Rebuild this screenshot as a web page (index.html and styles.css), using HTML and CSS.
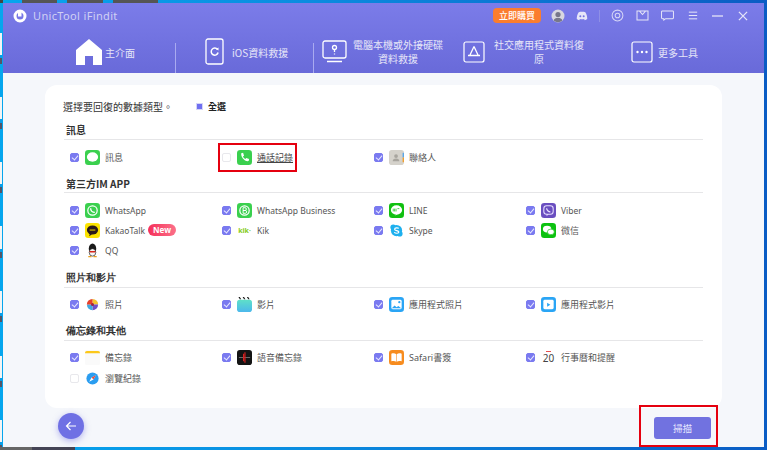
FILE: index.html
```html
<!DOCTYPE html>
<html lang="zh-Hant">
<head>
<meta charset="utf-8">
<title>UnicTool iFindit</title>
<link rel="stylesheet" href="styles.css">
</head>
<body>
<div class="window">
  <header class="head">
    <div class="titlebar">
      <svg class="logo" viewBox="0 0 14 14"><circle cx="7" cy="7" r="5" fill="none" stroke="#fff" stroke-width="3"/><path d="M5 1.500h3.500v6H5z" fill="#fff"/></svg>
      <span class="appname">UnicTool iFindit</span>
      <span class="buy">立即購買</span>
      <svg class="ti avatar" viewBox="0 0 14 14"><circle cx="7" cy="7" r="6.500" fill="#d8d8e0"/><circle cx="7" cy="5.500" r="2.600" fill="#77778a"/><path d="M2.600 11.500a4.600 4 0 0 1 8.800 0 6.500 6.500 0 0 1-8.800 0z" fill="#77778a"/></svg>
      <svg class="ti discord" viewBox="0 0 14 12"><path d="M3 1.500C5 .8 9 .8 11 1.500c1.500 2 2.300 5 2.300 8-1 .8-2 1.200-3 1.500l-.8-1.300c-1.600.4-3.400.4-5 0L3.700 11c-1-.3-2-.7-3-1.500 0-3 .8-6 2.300-8z" fill="#e6e6f8"/><circle cx="5" cy="6.300" r="1.200" fill="#7374e0"/><circle cx="9" cy="6.300" r="1.200" fill="#7374e0"/></svg>
      <span class="vsep"></span>
      <svg class="ti target" viewBox="0 0 14 14"><circle cx="7" cy="7" r="5.800" fill="none" stroke="#d6d6f6" stroke-width="1.100"/><circle cx="7" cy="7" r="2.500" fill="none" stroke="#d6d6f6" stroke-width="1.100"/></svg>
      <svg class="ti mail" viewBox="0 0 14 12"><path d="M1 1h12v10H1zM3.500 1 7 5l3.500-4" fill="none" stroke="#e6e6f8" stroke-width="1.100"/></svg>
      <svg class="ti chat" viewBox="0 0 14 12"><path d="M1.500 1h11a1 1 0 0 1 1 1v6.500a1 1 0 0 1-1 1H5L3 11V9.500H1.500a1 1 0 0 1-1-1V2a1 1 0 0 1 1-1z" fill="none" stroke="#e6e6f8" stroke-width="1.100"/></svg>
      <svg class="ti menu" viewBox="0 0 12 10"><path d="M1 1h10M1 5h10M1 9h10" stroke="#e6e6f8" stroke-width="1.200"/></svg>
      <svg class="ti mini" viewBox="0 0 12 10"><path d="M0 5h12" stroke="#e6e6f8" stroke-width="1.400"/></svg>
      <svg class="ti close" viewBox="0 0 11 11"><path d="M1 1l9 9M10 1l-9 9" stroke="#e6e6f8" stroke-width="1.400"/></svg>
    </div>
    <nav class="tabs">
      <div class="tab tab-home">
        <svg class="ic-home" viewBox="0 0 26 26"><path d="M13 0 26 11v15H17V17H9v9H0V11z" fill="#fff"/></svg>
        <span class="tab-text single">主介面</span>
      </div>
      <div class="tab tab-ios">
        <svg class="ic-phone" viewBox="0 0 20 27"><rect x="1" y="1" width="17" height="25" rx="2" fill="none" stroke="#fff" stroke-width="1.300"/><path d="M12.500 11.500a3.500 3.500 0 1 0 .6 3" fill="none" stroke="#fff" stroke-width="1.500"/><path d="M11 11l2.500-1.500v3z" fill="#fff"/></svg>
        <span class="tab-text single">iOS資料救援</span>
      </div>
      <div class="tab tab-pc">
        <svg class="ic-pc" viewBox="0 0 25 23"><rect x="1" y="1" width="23" height="17" rx="2" fill="none" stroke="#fff" stroke-width="1.300"/><path d="M5 21.500h15" stroke="#fff" stroke-width="1.500"/><circle cx="12.500" cy="7.500" r="2" fill="none" stroke="#fff" stroke-width="1.300"/><path d="M12.500 10v2M12.500 13.500v1" stroke="#fff" stroke-width="1.300"/></svg>
        <span class="tab-text wrap">電腦本機或外接硬碟<br>資料救援</span>
      </div>
      <div class="tab tab-social">
        <svg class="ic-square" viewBox="0 0 22 22"><rect x="1" y="1" width="20" height="20" rx="2" fill="none" stroke="#fff" stroke-width="1.200"/><path d="M11 5.500 7 14M11 5.500 15 14M5 14.500h12" fill="none" stroke="#fff" stroke-width="1.300"/></svg>
        <span class="tab-text wrap social">社交應用程式資料復<br>原</span>
      </div>
      <div class="tab tab-more">
        <svg class="ic-square" viewBox="0 0 22 22"><rect x="1" y="1" width="20" height="20" rx="2" fill="none" stroke="#fff" stroke-width="1.200"/><circle cx="6.500" cy="11" r="1.200" fill="#fff"/><circle cx="11" cy="11" r="1.200" fill="#fff"/><circle cx="15.500" cy="11" r="1.200" fill="#fff"/></svg>
        <span class="tab-text single">更多工具</span>
      </div>
    </nav>
  </header>
  <main class="body">
    <section class="card">
      <div class="intro">
        <span class="intro-text">選擇要回復的數據類型。</span>
        <span class="all-box"></span>
        <span class="all-text">全選</span>
      </div>

      <h2 class="group first">訊息</h2>
      <div class="grid">
        <div class="item"><span class="cb on"></span>
          <svg class="app" viewBox="0 0 16 16"><rect width="16" height="16" rx="3.500" fill="#3ad04e"/><ellipse cx="8" cy="7.500" rx="6" ry="5" fill="#fff"/></svg><span>訊息</span></div>
        <div class="item marked"><span class="cb"></span>
          <svg class="app" viewBox="0 0 16 16"><rect width="16" height="16" rx="3.500" fill="#3ad04e"/><path d="M4.500 3.500 6.500 3l1 3-1.200 1c.5 1.200 1.400 2.100 2.600 2.700l1-1.200 3 1.100-.5 2.200c-4 1-8.500-4-7.900-8.300z" fill="#fff"/></svg><span class="under">通話記錄</span></div>
        <div class="item"><span class="cb on"></span>
          <svg class="app" viewBox="0 0 16 16"><rect width="16" height="16" rx="3" fill="#d5d2cb"/><rect x="14.500" y="3" width="1.500" height="5" fill="#5aa7e8"/><rect x="14.500" y="8" width="1.500" height="5" fill="#f0a030"/><circle cx="7.500" cy="6.500" r="2" fill="#a8a59e"/><path d="M4 12a3.500 3 0 0 1 7 0z" fill="#a8a59e"/></svg><span>聯絡人</span></div>
      </div>

      <h2 class="group">第三方IM APP</h2>
      <div class="grid">
        <div class="item"><span class="cb on"></span>
          <svg class="app" viewBox="0 0 16 16"><rect width="16" height="16" rx="3.500" fill="#3ad04e"/><circle cx="8" cy="8" r="5" fill="none" stroke="#fff" stroke-width="1.300"/><path d="M6 5.500c0 2.500 2 4.500 4.500 4.500" fill="none" stroke="#fff" stroke-width="1.500"/></svg><span class="lat">WhatsApp</span></div>
        <div class="item"><span class="cb on"></span>
          <svg class="app" viewBox="0 0 16 16"><rect width="16" height="16" rx="3.500" fill="#3ad04e"/><circle cx="8" cy="8" r="5" fill="none" stroke="#fff" stroke-width="1.300"/><path d="M6.500 5h2a1.500 1.500 0 0 1 0 3h-2zM6.500 8h2.300a1.500 1.500 0 0 1 0 3H6.500z" fill="none" stroke="#fff"/></svg><span class="lat">WhatsApp Business</span></div>
        <div class="item"><span class="cb on"></span>
          <svg class="app" viewBox="0 0 16 16"><rect width="16" height="16" rx="3.500" fill="#10c010"/><ellipse cx="8" cy="7.500" rx="6" ry="5" fill="#fff"/><path d="M6 13.500l2-1.500h1z" fill="#fff"/><path d="M4.500 6v3M6 6v3M7.500 6v3M9 6h2" stroke="#10c010" stroke-width=".8"/></svg><span class="lat">LINE</span></div>
        <div class="item"><span class="cb on"></span>
          <svg class="app" viewBox="0 0 16 16"><rect width="16" height="16" rx="3.500" fill="#6a4ec0"/><rect x="3" y="3" width="10" height="9" rx="3" fill="none" stroke="#e8e0ff" stroke-width="1.100"/><path d="M6 12v2l2-2" fill="#e8e0ff"/><path d="M6 5.500c0 2 2 4 4 4" fill="none" stroke="#e8e0ff" stroke-width="1.300"/></svg><span class="lat">Viber</span></div>

        <div class="item"><span class="cb on"></span>
          <svg class="app" viewBox="0 0 16 16"><rect width="16" height="16" rx="3.500" fill="#fbe300"/><ellipse cx="8" cy="7.500" rx="6" ry="4.800" fill="#2a1a1a"/><path d="M5 11.500 4.500 14 7.500 12z" fill="#2a1a1a"/><path d="M5 7.500h6" stroke="#fbe300"/></svg><span class="lat">KakaoTalk</span><span class="new">New</span></div>
        <div class="item"><span class="cb on"></span>
          <span class="app kik">kik·</span><span class="lat">Kik</span></div>
        <div class="item"><span class="cb on"></span>
          <svg class="app" viewBox="0 0 16 16"><circle cx="8" cy="8" r="6" fill="#1eb0ee"/><circle cx="4.500" cy="4.500" r="3" fill="#1eb0ee"/><circle cx="11.500" cy="11.500" r="3" fill="#1eb0ee"/><path d="M10.500 5.800c-1-1-4.500-1-4.500.8s4.500 1.200 4.500 3c0 1.700-3.500 1.700-5 .4" fill="none" stroke="#fff" stroke-width="1.300"/></svg><span class="lat">Skype</span></div>
        <div class="item"><span class="cb on"></span>
          <svg class="app" viewBox="0 0 16 16"><rect width="16" height="16" rx="3.500" fill="#0cc210"/><ellipse cx="6.500" cy="6.500" rx="4.500" ry="3.700" fill="#fff"/><ellipse cx="10.500" cy="9.500" rx="3.700" ry="3" fill="#fff" stroke="#0cc210" stroke-width=".7"/></svg><span>微信</span></div>

        <div class="item"><span class="cb on"></span>
          <svg class="app" viewBox="0 0 16 16"><ellipse cx="8" cy="6" rx="4" ry="5.500" fill="#1a1a1a"/><ellipse cx="8" cy="10" rx="3.500" ry="4" fill="#f5f5f5" stroke="#1a1a1a" stroke-width=".7"/><path d="M4.500 8.500h7l-1 1.500h-5z" fill="#d8261c"/><path d="M3.500 14.500h3.500M9 14.500h3.500" stroke="#e9a020" stroke-width="1.300"/></svg><span class="lat">QQ</span></div>
      </div>

      <h2 class="group serif">照片和影片</h2>
      <div class="grid tight">
        <div class="item"><span class="cb on"></span>
          <svg class="app" viewBox="0 0 16 16"><circle cx="8" cy="8" r="6" fill="#f0f0f0"/><path d="M8 2a6 6 0 0 1 6 6H8z" fill="#f5c430"/><path d="M14 8a6 6 0 0 1-6 6V8z" fill="#7050c8"/><path d="M8 14a6 6 0 0 1-6-6h6z" fill="#40a8e0"/><path d="M2 8a6 6 0 0 1 6-6v6z" fill="#e8402a"/><circle cx="8" cy="8" r="1.600" fill="#a02040"/></svg><span>照片</span></div>
        <div class="item"><span class="cb on"></span>
          <svg class="app" viewBox="0 0 16 16"><defs><linearGradient id="fm" x1="0" y1="0" x2="0" y2="1"><stop offset="0" stop-color="#5ee0c8"/><stop offset="1" stop-color="#4cb8ec"/></linearGradient></defs><rect y="3" width="16" height="13" rx="3" fill="url(#fm)"/><path d="M1.500 0l1.500 2.500h1.500L3 0zM6 0l1.500 2.500H9L7.500 0zM10.500 0 12 2.500h1.500L12 0z" fill="#1a1a1a"/></svg><span>影片</span></div>
        <div class="item"><span class="cb on"></span>
          <svg class="app" viewBox="0 0 16 16"><rect width="16" height="16" rx="3.500" fill="#2aa5f5"/><rect x="2.500" y="3" width="11" height="10" rx="1.500" fill="#fff"/><path d="M3 12l3-3 2 2 2-1.500 3 2.500z" fill="#2aa5f5"/><circle cx="11" cy="5.500" r="1.200" fill="#2aa5f5"/></svg><span>應用程式照片</span></div>
        <div class="item"><span class="cb on"></span>
          <svg class="app" viewBox="0 0 16 16"><rect width="16" height="16" rx="3.500" fill="#2aa5f5"/><rect x="2.500" y="3" width="11" height="10" rx="1.500" fill="#fff"/><path d="M6.500 6l3.500 2.200-3.500 2.200z" fill="#2aa5f5"/></svg><span>應用程式影片</span></div>
      </div>

      <h2 class="group serif last">備忘錄和其他</h2>
      <div class="grid tight tall">
        <div class="item"><span class="cb on"></span>
          <svg class="app" viewBox="0 0 16 16"><rect width="16" height="16" rx="2" fill="#fafafa"/><path d="M0 3a2 2 0 0 1 2-2h12a2 2 0 0 1 2 2v.5H0z" fill="#fcc81a"/></svg><span>備忘錄</span></div>
        <div class="item"><span class="cb on"></span>
          <svg class="app" viewBox="0 0 16 16"><rect width="16" height="16" rx="3" fill="#141414"/><path d="M2 8h12" stroke="#999" stroke-width=".7"/><path d="M7 4v8M8.500 2.500v11" stroke="#d82020" stroke-width="1.200"/></svg><span>語音備忘錄</span></div>
        <div class="item"><span class="cb on"></span>
          <svg class="app" viewBox="0 0 16 16"><rect width="16" height="16" rx="3.500" fill="#f78c1e"/><path d="M2.500 4c2-.7 4-.5 5.200.5v8c-1.200-1-3.200-1-5.200-.5zM13.500 4c-2-.7-4-.5-5.200.5v8c1.200-1 3.200-1 5.200-.5z" fill="#fff"/></svg><span>Safari書簽</span></div>
        <div class="item"><span class="cb on"></span>
          <span class="app cal">20</span><span>行事曆和提醒</span></div>

        <div class="item"><span class="cb"></span>
          <svg class="app" viewBox="0 0 16 16"><circle cx="8" cy="8" r="6.500" fill="#2a9df0"/><path d="M11.500 4.500 9 9 4.500 11.500 7 7z" fill="#fff"/><path d="M11.500 4.500 7 7l2 2z" fill="#e84a3a"/></svg><span>瀏覽紀錄</span></div>
      </div>
    </section>
    <footer class="foot">
      <button class="back" type="button"><svg viewBox="0 0 12 12"><path d="M11 6H1.500M5.500 2 1.500 6l4 4" fill="none" stroke="#fff" stroke-width="1.200"/></svg></button>
      <button class="scan" type="button">掃描</button>
    </footer>
  </main>
</div>
</body>
</html>
```
FILE: styles.css
```css
* { box-sizing: border-box; }
html, body { margin: 0; padding: 0; }
body {
  width: 767px;
  height: 450px;
  overflow: hidden;
  padding: 3px 3px 3px 3px;
  background:
    linear-gradient(90deg, #444 0 3px, transparent 3px 22px, #555 22px 57px, transparent 57px 67px, #555 67px 103px, transparent 103px 113px, #555 113px 158px, transparent 158px) 0 0 / 100% 3px no-repeat,
    linear-gradient(90deg, #666 0 32px, #445 32px 75px, transparent 75px) 0 100% / 100% 3px no-repeat,
    repeating-linear-gradient(180deg, transparent 0 33px, #f4f4f4 33px 55px, #0a9de8 55px 58px, #556 58px 64.500px) 0 0 / 2px 100% no-repeat,
    linear-gradient(90deg, #06a6ee, #0a8ce0 40%, #0a5cc4);
  font-family: "Noto Sans CJK TC", "Noto Sans", sans-serif;
}
.window {
  width: 761px;
  height: 444px;
  display: flex;
  flex-direction: column;
  background: #f5f7fb;
}
.head {
  height: 70px;
  flex: none;
  background: linear-gradient(180deg, #7b7ce9, #696ad9);
}
.titlebar {
  height: 25px;
  display: flex;
  align-items: center;
  padding-left: 10px;
}
.logo { width: 14px; height: 14px; flex: none; }
.appname {
  font: 11px "Noto Sans", sans-serif;
  color: #d0d0f4;
  margin-left: 6px;
  letter-spacing: .35px;
  width: 460px;
  flex: none;
}
.buy {
  width: 48px;
  height: 15px;
  flex: none;
  border-radius: 4px;
  background: #fb7d2e;
  color: #fff;
  font-size: 9px;
  font-weight: 500;
  line-height: 15px;
  text-align: center;
}
.ti { flex: none; display: block; }
.avatar { width: 14px; height: 14px; margin-left: 10px; }
.discord { width: 12px; height: 10px; margin-left: 11px; }
.vsep { width: 1px; height: 12px; background: #8f90e6; margin-left: 11px; flex: none; }
.target { width: 13px; height: 13px; margin-left: 11px; }
.mail { width: 13px; height: 11px; margin-left: 12px; }
.chat { width: 13px; height: 11px; margin-left: 12px; }
.menu { width: 10px; height: 9px; margin-left: 14px; }
.mini { width: 11px; height: 10px; margin-left: 14px; }
.close { width: 10px; height: 10px; margin-left: 15px; }

.tabs {
  height: 45px;
  display: grid;
  grid-template-columns: 173px 138px 146px 143px 1fr;
  color: #e6e6f8;
}
.tab {
  display: flex;
  align-items: center;
  font-size: 10px;
  line-height: 14px;
  padding-top: 2px;
}
.tab-home, .tab-ios {
  background: linear-gradient(#a9aaf0, #a9aaf0) 100% 100% / 1px 30px no-repeat;
}
.tab-text { display: block; }
.single { margin-top: 2px; }
.tab-home { padding-left: 73px; gap: 3px; }
.tab-ios { padding-left: 29px; gap: 7px; }
.tab-pc { padding-left: 8px; gap: 6px; }
.tab-social { padding-left: 3px; gap: 8px; }
.tab-more { padding-left: 28px; gap: 5px; }
.wrap { text-align: center; }
.social { width: 92px; }
.ic-home { width: 26px; height: 26px; flex: none; }
.ic-phone { width: 20px; height: 27px; flex: none; }
.ic-pc { width: 25px; height: 23px; flex: none; }
.ic-square { width: 22px; height: 22px; flex: none; }

.body {
  flex: 1;
  display: flex;
  flex-direction: column;
  padding: 12px 42px 0 42px;
}
.card {
  height: 323px;
  flex: none;
  background: #fff;
  border-radius: 12px;
  padding: 14px 19px 0 19px;
}
.intro {
  display: flex;
  align-items: center;
  height: 14px;
  margin-left: -1px;
  color: #333;
  font-size: 10px;
}
.intro-text { width: 134px; flex: none; font-family: "Noto Sans CJK SC", "Noto Sans CJK TC", sans-serif; }
.all-box { width: 5px; height: 5px; background: #6f6ff0; outline: 1.500px solid #d5d5f8; flex: none; }
.all-text { margin-left: 6px; font-size: 9px; font-weight: 700; color: #222; }

.group {
  margin: 6px 0 0;
  height: 20px;
  padding: 4px 0 0 2px;
  border-bottom: 1px solid #e6e6e8;
  font-size: 10px;
  line-height: 14px;
  font-weight: 700;
  color: #333;
}
.group.first { margin-top: 8px; height: 19px; padding-top: 2px; }
.group.serif { margin-top: 8px; padding-top: 3px; font-family: serif; }
.group.serif.last { margin-top: 7px; }
.grid {
  display: grid;
  grid-template-columns: repeat(4, 152px);
  grid-auto-rows: 20px;
  padding-top: 7px;
}
.grid.tight { padding-top: 6px; }
.grid.tall { grid-auto-rows: 21px; }
.item {
  position: relative;
  display: flex;
  align-items: center;
  padding-left: 6px;
  font-size: 9px;
  color: #555;
  font-family: "Noto Sans", "Noto Sans CJK TC", sans-serif;
}
.lat { font-size: 8.500px; }
.cb {
  width: 9px;
  height: 9px;
  flex: none;
  border: 1px solid #e8e8ec;
  border-radius: 2px;
  background: #fff;
  position: relative;
}
.cb.on {
  border-color: #7a7af0;
  background: #7a7af0;
}
.cb.on::after {
  content: "";
  position: absolute;
  left: 2px;
  top: 0;
  width: 3px;
  height: 5px;
  border: solid #e8e8ff;
  border-width: 0 1px 1px 0;
  transform: rotate(40deg);
}
.app { width: 15px; height: 15px; flex: none; margin: 0 5px 0 6px; display: block; }
.kik {
  color: #88cc22;
  font: 700 7px/15px "Noto Sans", sans-serif;
  text-align: center;
}
.cal {
  position: relative;
  color: #444;
  font: 10px/17px "Noto Sans", sans-serif;
  text-align: center;
}
.cal::before {
  content: "";
  position: absolute;
  left: 5px;
  top: 1px;
  width: 5px;
  height: 1px;
  background: #e85050;
}
.under { text-decoration: underline; color: #444; }
.new {
  margin-left: 3px;
  padding: 0 5px;
  height: 12px;
  border-radius: 6px;
  background: linear-gradient(90deg, #f5305a, #fb7088);
  color: #fff;
  font-size: 8px;
  font-weight: 700;
  line-height: 12px;
}
.marked::after {
  content: "";
  position: absolute;
  box-sizing: border-box;
  left: 2px;
  top: -4px;
  width: 79px;
  height: 29px;
  border: 2px solid #e5000f;
  pointer-events: none;
}
.foot {
  flex: 1;
  display: flex;
  align-items: center;
  justify-content: space-between;
}
.back {
  width: 26px;
  height: 26px;
  margin: 0 0 4px 13px;
  padding: 5px;
  border: 0;
  border-radius: 50%;
  background: #6f70e4;
  box-shadow: 0 2px 6px rgba(111, 112, 228, .5);
  display: flex;
}
.back svg { width: 12px; height: 12px; margin: auto; }
.scan {
  width: 57px;
  height: 22px;
  margin: 1px 11px 0 0;
  position: relative;
  border: 0;
  border-radius: 3px;
  background: #7172e0;
  color: #e8e8ff;
  font: 9.500px "Noto Sans CJK TC", sans-serif;
}
.scan::after {
  content: "";
  position: absolute;
  box-sizing: border-box;
  left: -15px;
  top: -12px;
  width: 79px;
  height: 42px;
  border: 2px solid #e5000f;
  pointer-events: none;
}
```
